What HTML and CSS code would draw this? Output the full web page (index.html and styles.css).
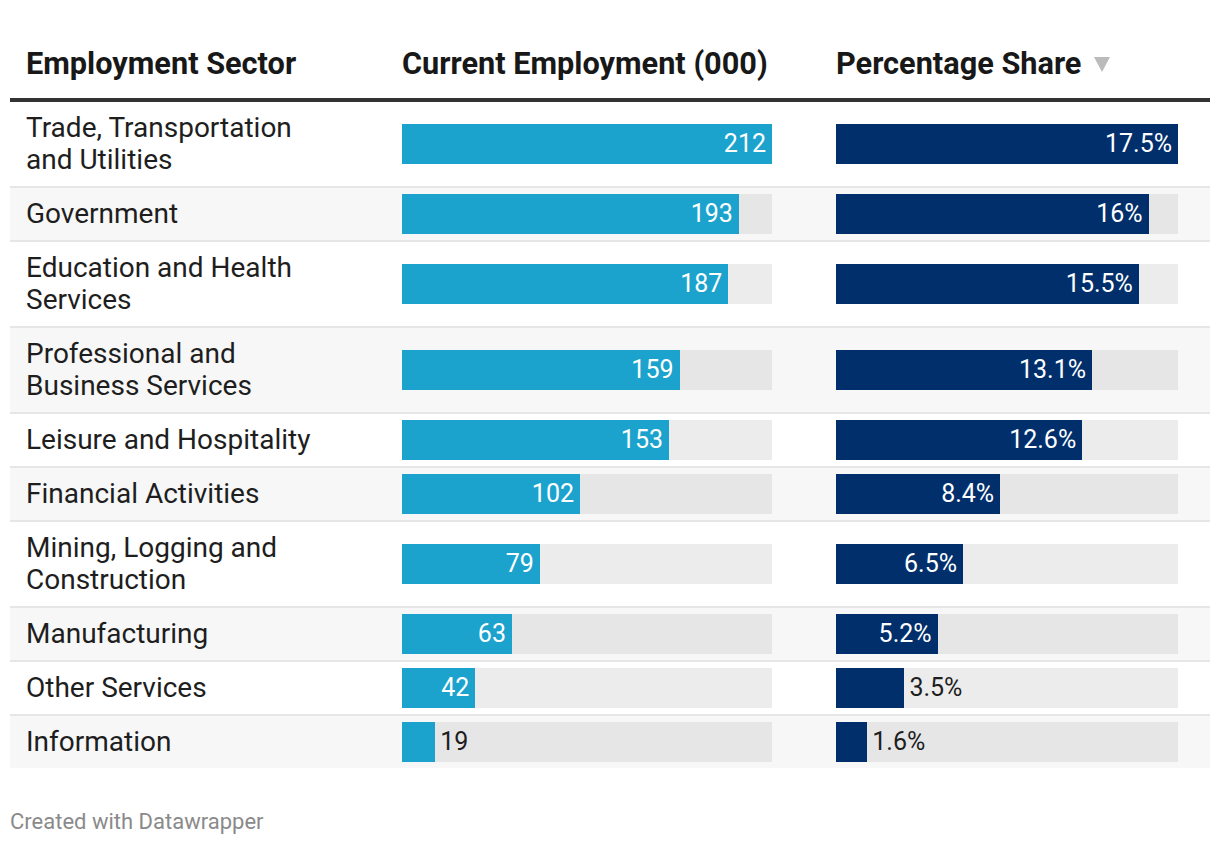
FILE: index.html
```html
<!DOCTYPE html>
<html lang="en">
<head>
<meta charset="utf-8">
<title>Employment by Sector</title>
<link rel="stylesheet" href="styles.css">
</head>
<body>
<div class="chart">
  <table class="dw-table">
    <colgroup>
      <col class="col-sector">
      <col class="col-emp">
      <col class="col-share">
    </colgroup>
    <thead>
      <tr>
        <th class="c-sector">Employment Sector</th>
        <th class="c-emp">Current Employment (000)</th>
        <th class="c-share">Percentage Share<span class="sort-arrow"></span></th>
      </tr>
    </thead>
    <tbody>
      <tr>
        <td class="c-sector"><div class="label">Trade, Transportation and Utilities</div></td>
        <td class="c-emp"><div class="track track-emp"><div class="bar bar-blue" style="width:100%"><span class="val">212</span></div></div></td>
        <td class="c-share"><div class="track track-share"><div class="bar bar-navy" style="width:100%"><span class="val">17.5%</span></div></div></td>
      </tr>
      <tr>
        <td class="c-sector"><div class="label">Government</div></td>
        <td class="c-emp"><div class="track track-emp"><div class="bar bar-blue" style="width:91.04%"><span class="val">193</span></div></div></td>
        <td class="c-share"><div class="track track-share"><div class="bar bar-navy" style="width:91.43%"><span class="val">16%</span></div></div></td>
      </tr>
      <tr>
        <td class="c-sector"><div class="label">Education and Health Services</div></td>
        <td class="c-emp"><div class="track track-emp"><div class="bar bar-blue" style="width:88.21%"><span class="val">187</span></div></div></td>
        <td class="c-share"><div class="track track-share"><div class="bar bar-navy" style="width:88.57%"><span class="val">15.5%</span></div></div></td>
      </tr>
      <tr>
        <td class="c-sector"><div class="label">Professional and Business Services</div></td>
        <td class="c-emp"><div class="track track-emp"><div class="bar bar-blue" style="width:75%"><span class="val">159</span></div></div></td>
        <td class="c-share"><div class="track track-share"><div class="bar bar-navy" style="width:74.86%"><span class="val">13.1%</span></div></div></td>
      </tr>
      <tr>
        <td class="c-sector"><div class="label">Leisure and Hospitality</div></td>
        <td class="c-emp"><div class="track track-emp"><div class="bar bar-blue" style="width:72.17%"><span class="val">153</span></div></div></td>
        <td class="c-share"><div class="track track-share"><div class="bar bar-navy" style="width:72%"><span class="val">12.6%</span></div></div></td>
      </tr>
      <tr>
        <td class="c-sector"><div class="label">Financial Activities</div></td>
        <td class="c-emp"><div class="track track-emp"><div class="bar bar-blue" style="width:48.11%"><span class="val">102</span></div></div></td>
        <td class="c-share"><div class="track track-share"><div class="bar bar-navy" style="width:48%"><span class="val">8.4%</span></div></div></td>
      </tr>
      <tr>
        <td class="c-sector"><div class="label">Mining, Logging and Construction</div></td>
        <td class="c-emp"><div class="track track-emp"><div class="bar bar-blue" style="width:37.26%"><span class="val">79</span></div></div></td>
        <td class="c-share"><div class="track track-share"><div class="bar bar-navy" style="width:37.14%"><span class="val">6.5%</span></div></div></td>
      </tr>
      <tr>
        <td class="c-sector"><div class="label">Manufacturing</div></td>
        <td class="c-emp"><div class="track track-emp"><div class="bar bar-blue" style="width:29.72%"><span class="val">63</span></div></div></td>
        <td class="c-share"><div class="track track-share"><div class="bar bar-navy" style="width:29.71%"><span class="val">5.2%</span></div></div></td>
      </tr>
      <tr>
        <td class="c-sector"><div class="label">Other Services</div></td>
        <td class="c-emp"><div class="track track-emp"><div class="bar bar-blue" style="width:19.81%"><span class="val">42</span></div></div></td>
        <td class="c-share"><div class="track track-share"><div class="bar bar-navy" style="width:20%"></div><span class="val-out">3.5%</span></div></td>
      </tr>
      <tr>
        <td class="c-sector"><div class="label">Information</div></td>
        <td class="c-emp"><div class="track track-emp"><div class="bar bar-blue" style="width:8.96%"></div><span class="val-out">19</span></div></td>
        <td class="c-share"><div class="track track-share"><div class="bar bar-navy" style="width:9.14%"></div><span class="val-out">1.6%</span></div></td>
      </tr>
    </tbody>
  </table>
  <div class="footer">Created with Datawrapper</div>
</div>
</body>
</html>
```

FILE: styles.css
```css
html, body {
  margin: 0;
  padding: 0;
  background: #ffffff;
}

body {
  font-family: Roboto, "Liberation Sans", Arial, sans-serif;
  color: #1e1e1e;
}

.chart {
  padding: 10px 10px 0 10px;
  width: 1200px;
}

.dw-table {
  width: 1200px;
  table-layout: fixed;
  border-collapse: separate;
  border-spacing: 0;
}

.col-sector { width: 376px; }
.col-emp { width: 434px; }
.col-share { width: 390px; }

.dw-table th {
  font-size: 30.7px;
  font-weight: 700;
  line-height: 32px;
  color: #181818;
  text-align: left;
  padding: 38px 16px 18px 16px;
  border-bottom: 4px solid #333333;
  white-space: nowrap;
  vertical-align: bottom;
}

.sort-arrow {
  display: inline-block;
  width: 0;
  height: 0;
  margin-left: 13px;
  border-left: 8.5px solid transparent;
  border-right: 8.5px solid transparent;
  border-top: 15px solid #bbbbbb;
  vertical-align: 2px;
}

.dw-table td {
  font-size: 28px;
  line-height: 32px;
  vertical-align: middle;
  border-bottom: 2px solid #e6e6e6;
}

.dw-table tbody tr:last-child td {
  border-bottom: none;
}

.dw-table tbody tr:nth-child(even) td {
  background: #f7f7f7;
}

.dw-table td.c-sector {
  padding: 10px 16px;
}

.label {
  width: 300px;
}

.dw-table td.c-emp,
.dw-table td.c-share {
  padding: 6px 16px;
}

.track {
  display: flex;
  align-items: center;
  height: 40px;
  background: #ececec;
}

.dw-table tbody tr:nth-child(even) .track {
  background: #e6e6e6;
}

.track-emp { width: 370px; }
.track-share { width: 342px; }

.bar {
  height: 40px;
  box-sizing: border-box;
  display: flex;
  align-items: center;
  justify-content: flex-end;
  padding-right: 6px;
  flex: none;
}

.bar-blue { background: #1ba3ce; }
.bar-navy { background: #002f6c; }

.val {
  color: #ffffff;
  font-size: 25px;
  line-height: 30px;
}

.val-out {
  color: #1e1e1e;
  font-size: 25px;
  line-height: 30px;
  margin-left: 5px;
}

.footer {
  margin-top: 42px;
  font-size: 22px;
  line-height: 24px;
  color: #8a8a8a;
}
```
